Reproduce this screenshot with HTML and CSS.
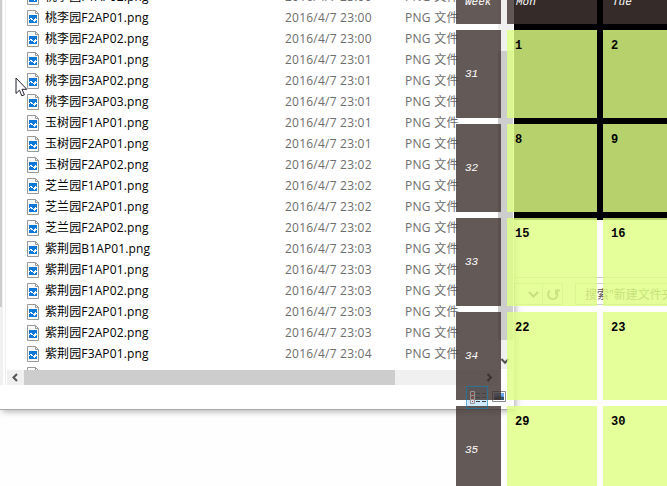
FILE: index.html
```html
<!DOCTYPE html>
<html lang="zh-CN">
<head>
<meta charset="utf-8">
<title>Desktop calendar</title>
<link rel="stylesheet" href="styles.css">
</head>
<body>
<div class="desktop">
  <div class="window console"></div>
  <div class="window browser">
    <div class="address"><svg width="48" height="20" viewBox="0 0 48 20"><path d="M14 8l4.500 4.500L23 8" fill="none" stroke="#555" stroke-width="2"/><path d="M27.500 0v20" stroke="#ccc"/><path d="M34.800 6.800a4.700 4.700 0 1 0 6 0M41 11V6.500h4" fill="none" stroke="#666" stroke-width="1.800"/></svg></div>
    <div class="search">搜索"新建文件夹"</div>
  </div>
  <div class="window explorer">
    <div class="nav"><div class="nav-thumb"></div></div>
    <div class="files" id="files"></div>
    <div class="vscroll"><div class="vthumb"></div><svg class="down" width="10" height="8" viewBox="0 0 10 8"><path d="M1.500 1L5 4.800L8.500 1" fill="none" stroke="#505050" stroke-width="2"/></svg></div>
    <div class="hscroll">
      <svg width="17" height="15" viewBox="0 0 17 15"><path d="M10 4L6.500 7.500L10 11" fill="none" stroke="#555" stroke-width="2"/></svg>
      <div class="hthumb"></div>
      <svg class="right" width="17" height="15" viewBox="0 0 17 15"><path d="M6.500 4L10 7.500L6.500 11" fill="none" stroke="#222" stroke-width="2"/></svg>
    </div>
    <div class="status">
      <div class="view-details"></div>
      <svg class="view-large" width="14" height="11" viewBox="0 0 14 11"><path d="M.5.5h13v10H.5z" fill="#fff" stroke="#888"/><path d="M2 2h10v4H2z" fill="#6aa4f4"/><path d="M2 6l5-1 5 1v3H2z" fill="#34546b"/></svg>
    </div>
  </div>
  <svg class="cursor" width="13" height="20" viewBox="0 0 13 20"><path d="M1 1v15.500l3.500-3.300 2.300 5.600 2.600-1-2.400-5.500h4.800z" fill="#fff" stroke="#223"/></svg>
  <div class="calendar">
    <div class="week head">Week</div><div class="week head">Mon</div><div class="week head">Tue</div>
    <div class="week">31</div><div class="day">1</div><div class="day">2</div>
    <div class="week">32</div><div class="day">8</div><div class="day">9</div>
    <div class="week">33</div><div class="day">15</div><div class="day">16</div>
    <div class="week">34</div><div class="day">22</div><div class="day">23</div>
    <div class="week">35</div><div class="day">29</div><div class="day">30</div>
  </div>
  <div class="selected-view"><svg width="20" height="21" viewBox="0 0 20 21"><g fill="none" stroke="#a08f8c"><path d="M3.500 4.500h4v4h-4zM3.500 8.500h4v4h-4zM3.500 12.500h4v4h-4z"/></g><path d="M9 6.500h4m2 0h4M9 10.500h4m2 0h4M9 14.500h4m2 0h4" stroke="#444"/><path d="M5 6h1v1H5zM5 10h1v1H5zM5 14h1v1H5z" fill="#c22"/></svg></div>
</div>
<script src="files.js"></script>
</body>
</html>
```
FILE: styles.css
```css
* { box-sizing: border-box; }
body { margin: 0; width: 667px; height: 486px; overflow: hidden; background: #fefefe; font-family: "Open Sans", "Noto Sans CJK SC", sans-serif; font-size: 12px; }
.desktop { position: relative; width: 667px; height: 486px; overflow: hidden; }
.window { position: absolute; }
.console { left: 500px; top: 0; width: 180px; height: 220px; background: #000; }
.browser { left: 512px; top: 220px; width: 168px; height: 266px; padding: 63px 0 0 2px; display: flex; align-items: flex-start; gap: 12px; background: linear-gradient(#ccc, #ccc) 0 57px / 100% 1px no-repeat, #fefefe; }
.address { width: 49px; height: 22px; border: 1px solid #ccc; }
.address svg { display: block; }
.search { flex: 1; height: 22px; padding-left: 9px; border: 1px solid #ccc; color: #555; line-height: 21px; white-space: nowrap; }
.explorer { left: 0; top: 0; width: 514px; height: 410px; display: grid; grid-template: 370px 15px 24px / 7px 491px 16px; background: #fff; border-bottom: 1px solid #aaa; box-shadow: 2px 2px 6px rgba(0,0,0,.28); }
.nav { grid-row: 1 / 3; width: 6px; border-right: 1px solid #eee; background: linear-gradient(90deg, #f0f0f0 3px, #fff 3px); }
.nav-thumb { width: 2px; height: 307px; background: #cdcdcd; }
.files { height: 370px; overflow: hidden; }
.file { height: 21px; display: flex; align-items: center; padding-left: 20px; white-space: nowrap; line-height: 21px; }
.file:first-child { margin-top: -14px; }
.file svg { flex: none; width: 12px; height: 16px; margin-right: 6px; }
.name { width: 240px; color: #000; letter-spacing: .12px; }
.date { width: 120px; color: #6d6d6d; letter-spacing: .22px; }
.kind { color: #6d6d6d; letter-spacing: .3px; }
.vscroll { position: relative; grid-row: 1 / 3; grid-column: 3; width: 15px; height: 369px; padding-top: 51px; background: #f0f0f0; }
.vthumb { height: 289px; background: #cdcdcd; }
.down { position: absolute; left: 2px; top: 358px; }
.hscroll { grid-row: 2; grid-column: 2; display: flex; background: #f0f0f0; }
.hthumb { width: 371px; background: #cdcdcd; }
.right { margin-left: auto; }
.status { grid-row: 3; grid-column: 1 / 4; display: flex; align-items: flex-start; padding: 1px 8px 0 466px; gap: 4px; }
.view-details { width: 22px; height: 23px; background: #cce8ff; border: 1px solid #26a0da; }
.view-large { margin-top: 5px; }
.selected-view { position: absolute; left: 466px; top: 386px; width: 22px; height: 23px; border: 1px solid rgba(38,140,190,.6); background: linear-gradient(transparent 13px, rgba(204,232,255,.9) 13px 19px, transparent 19px); }
.selected-view svg { display: block; }
.cursor { position: absolute; left: 15px; top: 77px; }
.calendar { position: absolute; left: 456px; top: -64px; display: grid; grid-template-columns: 45px 90px 90px; grid-auto-rows: 88px; gap: 6px; font-family: "Liberation Mono", monospace; }
.week { display: flex; align-items: center; padding-left: 9px; background: rgba(65,53,50,.82); color: #fff; font-size: 11px; font-style: italic; line-height: 14px; }
.head { align-items: flex-end; padding-bottom: 15px; }
.day { padding: 9px 0 0 8px; background: rgba(223,255,132,.82); color: #000; font-size: 12px; font-weight: bold; line-height: 14px; }
```
FILE: files.js
```js
const groups = [
  ['桃李园', ['F1AP02', 'F2AP01', 'F2AP02', 'F3AP01', 'F3AP02', 'F3AP03']],
  ['玉树园', ['F1AP01', 'F2AP01', 'F2AP02']],
  ['芝兰园', ['F1AP01', 'F2AP01', 'F2AP02']],
  ['紫荆园', ['B1AP01', 'F1AP01', 'F1AP02', 'F2AP01', 'F2AP02', 'F3AP01']]
];
const minutes = [0, 0, 0, 1, 1, 1, 1, 1, 2, 2, 2, 2, 3, 3, 3, 3, 3, 4];
const icon = '<svg viewBox="0 0 12 16"><path d="M.5.5h8l3 3v12H.5z" fill="#fafafa" stroke="#999"/><path d="M8.500.5v3h3" fill="none" stroke="#999"/><path d="M2 5h8v8H2z" fill="#0b78d7"/><path d="M2 9h1V8h2v1h1v1h1V9h1V8h1v1h1v1H9v1H8v1H7v-1H6v-1H4V9H3v1H2z" fill="#fff"/></svg>';
let index = 0;
document.getElementById('files').innerHTML = groups.map(([place, items]) =>
  items.map(item => `<div class="file">${icon}<span class="name">${place}${item}.png</span><span class="date">2016/4/7 23:0${minutes[index++]}</span><span class="kind">PNG 文件</span></div>`).join('')
).join('') + `<div class="file">${icon}</div>`;
```
